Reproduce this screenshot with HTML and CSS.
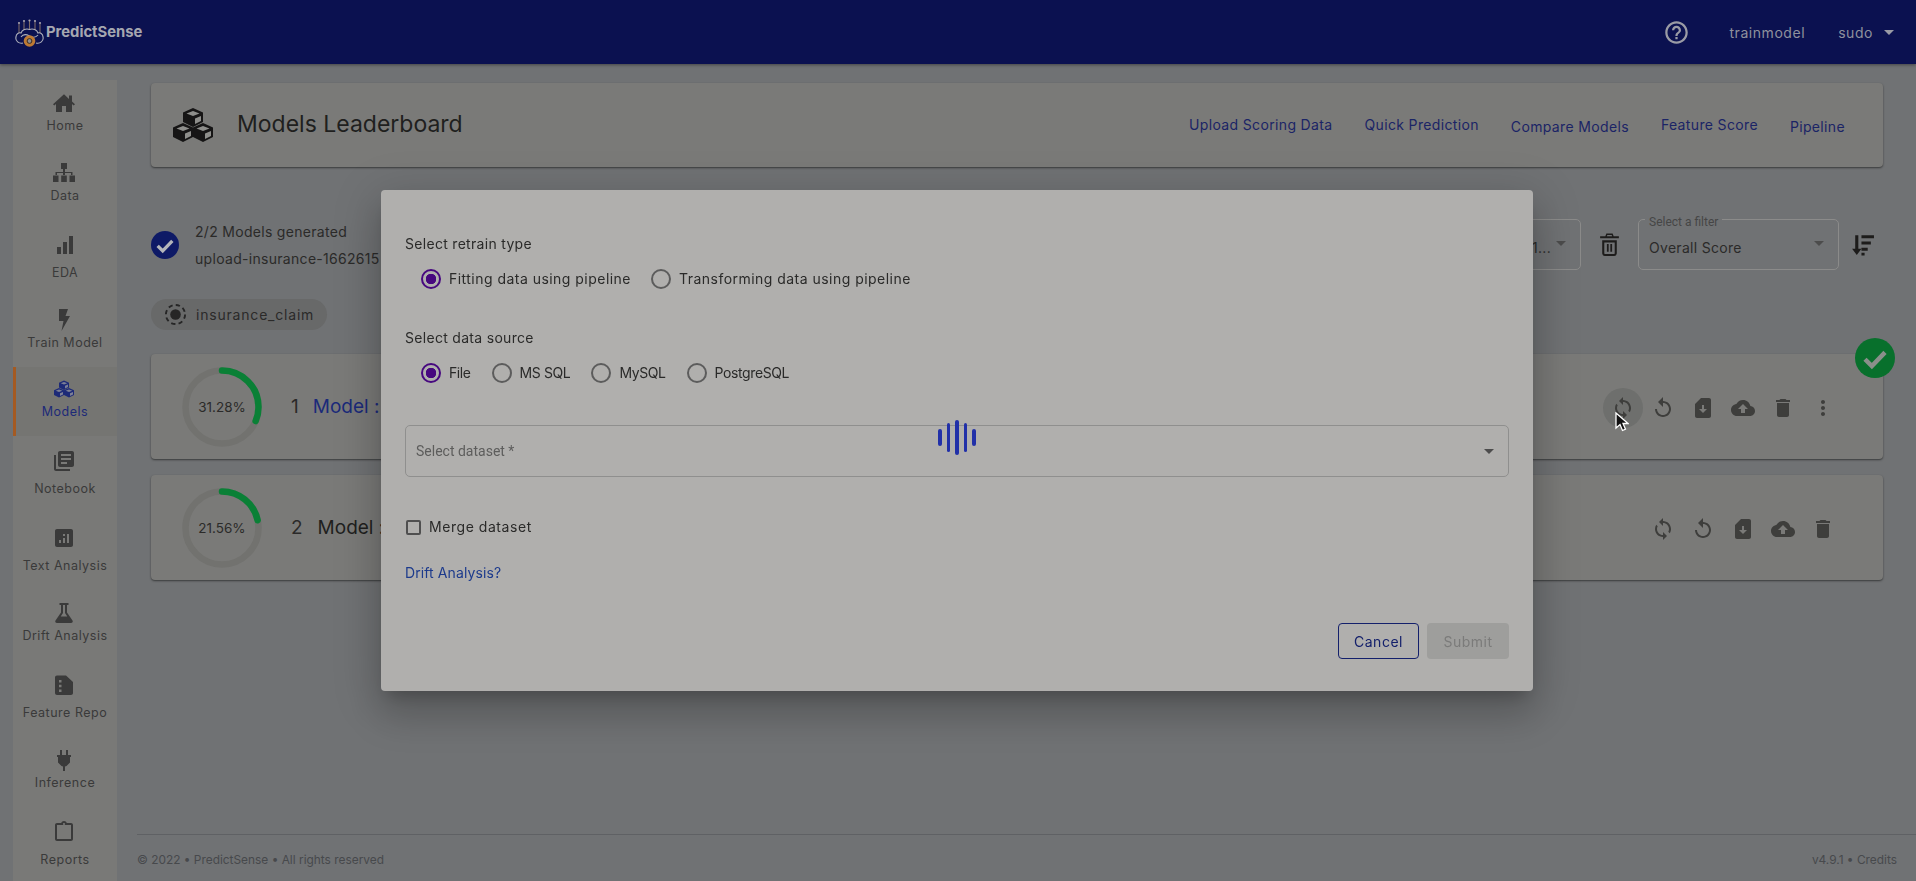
FILE: index.html
```html
<!DOCTYPE html>
<html>
<head>
    <title>PredictSense - Models Leaderboard</title>
    <link rel="stylesheet" href="styles.css">
</head>

<body>
<svg class="defs" width="0" height="0">
    <symbol id="i-home" viewBox="0 0 24 24"><path d="M12 3.200 1 13.200l1.300 1.400L4 13.100V21h6v-6h4v6h6v-7.900l1.700 1.500 1.300-1.400-3-2.700V4.500h-3v3.600z"/></symbol>
    <symbol id="i-data" viewBox="0 0 24 24"><path d="M9 2h6v6h-2v3h7.500v3H19v-2H13v2h-2v-2H5v2H3.500v-3H11V8H9zM1 14.500h5.500V21H1zM9.200 14.500h5.600V21H9.200zM17.500 14.500H23V21h-5.500z"/></symbol>
    <symbol id="i-bars" viewBox="0 0 24 24"><path d="M5 14h4v7H5zM11 9h4v12h-4zM17 3h4v18h-4z"/></symbol>
    <symbol id="i-bolt" viewBox="0 0 24 24"><path d="M7 1h9l-2.500 7H18L9.500 23l2-10H7z"/></symbol>
    <symbol id="i-cubes" viewBox="-4 -3 48 40">
        <g id="cube-top">
            <path d="M20 0l10 4.500V14l-10 5-10-5V4.500z"/>
            <path fill="var(--face)" d="M20 3l6.500 2.500L20 8l-6.500-2.500zM22 10.500l6-2.500v5l-6 3z"/>
        </g>
        <use href="#cube-top" x="-10" y="15"/>
        <use href="#cube-top" x="10" y="15"/>
    </symbol>
    <symbol id="i-book" viewBox="0 0 24 24"><path d="M4 6H2v14c0 1.100.9 2 2 2h14v-2H4V6zm16-4H8c-1.100 0-2 .9-2 2v12c0 1.100.9 2 2 2h12c1.100 0 2-.9 2-2V4c0-1.100-.9-2-2-2zm-1 9H9V9h10v2zm-4 4H9v-2h6v2zm4-8H9V5h10v2z"/></symbol>
    <symbol id="i-text" viewBox="0 0 24 24"><path d="M19 3H5c-1.100 0-2 .9-2 2v14c0 1.100.9 2 2 2h14c1.100 0 2-.9 2-2V5c0-1.100-.9-2-2-2zM9 17H7v-3h2v3zm4 0h-2v-5h2v5zm0-7h-2V8h2v2zm4 7h-2V8h2v9z"/></symbol>
    <symbol id="i-flask" viewBox="0 0 24 24"><path d="M7.500 2h9v2H15v7.500l5.500 8c.8 1.300-.2 2.500-1.500 2.500H5c-1.300 0-2.300-1.200-1.500-2.500l5.500-8V4H7.500zM11 4v8.100L8.700 15.500h6.600L13 12.100V4z" fill-rule="evenodd"/></symbol>
    <symbol id="i-file" viewBox="0 0 24 24"><path fill-rule="evenodd" d="M5 2.500h9l7 6.500V20c0 1.100-.9 2-2 2H5c-1.100 0-2-.9-2-2V4.500c0-1.100.9-2 2-2zM7 7v2.500h2.500V7zm0 4.800v2.500h2.500v-2.500zm0 4.800v2.500h2.500v-2.500z"/></symbol>
    <symbol id="i-plug" viewBox="0 0 24 24"><path d="M16.010 7 16 2h-2v5h-4V2H8v5H5v2h1v5.480L9.500 18l1.500.6V23h2v-4.400l1.500-.6 3.500-3.520V9h1V7z"/></symbol>
    <symbol id="i-clip" viewBox="0 0 24 24"><path d="M19 3h-4.180C14.400 1.840 13.300 1 12 1c-1.300 0-2.400.84-2.820 2H5c-1.100 0-2 .9-2 2v14c0 1.100.9 2 2 2h14c1.100 0 2-.9 2-2V5c0-1.100-.9-2-2-2zm-7 0c.55 0 1 .45 1 1s-.45 1-1 1-1-.45-1-1 .45-1 1-1zm7 16H5V5h14v14z"/></symbol>
    <symbol id="i-help" viewBox="0 0 24 24"><path d="M11 18h2v-2h-2v2zm1-16C6.480 2 2 6.480 2 12s4.480 10 10 10 10-4.480 10-10S17.520 2 12 2zm0 18c-4.410 0-8-3.590-8-8s3.590-8 8-8 8 3.590 8 8-3.590 8-8 8zm0-14c-2.210 0-4 1.790-4 4h2c0-1.100.9-2 2-2s2 .9 2 2c0 2-3 1.750-3 5h2c0-2.250 3-2.500 3-5 0-2.210-1.790-4-4-4z"/></symbol>
    <symbol id="i-check" viewBox="0 0 24 24"><path d="M4 13l5.500 5.500L20 7.500" fill="none" stroke="currentColor" stroke-width="3.600"/></symbol>
    <symbol id="i-trash-line" viewBox="0 0 24 24"><path d="M5 8v12.500C5 21.900 6.100 23 7.500 23h9c1.400 0 2.500-1.100 2.500-2.500V8zm2 2h10v10.500c0 .3-.2.5-.5.5h-9c-.3 0-.5-.2-.5-.5zm2.500 1.500V19h1.700v-7.500zm3.300 0V19h1.700v-7.500zM9 1.500 8 4H3v2h18V4h-5l-1-2.500zm.9 1.400h4.200l.4 1.100h-5z"/></symbol>
    <symbol id="i-sort" viewBox="0 0 24 24"><path d="M5 3h3v13h3l-4.500 6L2 16h3zM11 3h12v3H11zM11 9h9v3h-9zM11 15h6v3h-6zM11 20h3v2.500h-3z"/></symbol>
    <symbol id="i-sync" viewBox="0 0 24 24"><path d="M12 4V1L8 5l4 4V6c3.310 0 6 2.690 6 6 0 1.010-.25 1.970-.7 2.800l1.460 1.460C19.540 15.030 20 13.570 20 12c0-4.420-3.580-8-8-8zm0 14c-3.310 0-6-2.690-6-6 0-1.010.25-1.970.7-2.800L5.240 7.740C4.460 8.970 4 10.430 4 12c0 4.420 3.580 8 8 8v3l4-4-4-4v3z"/></symbol>
    <symbol id="i-replay" viewBox="0 0 24 24"><path d="M12 5V1L7 6l5 5V7c3.310 0 6 2.690 6 6s-2.690 6-6 6-6-2.690-6-6H4c0 4.420 3.580 8 8 8s8-3.580 8-8-3.580-8-8-8z"/></symbol>
    <symbol id="i-sim" viewBox="0 0 24 24"><path d="M18 2h-8L4 8v12c0 1.100.9 2 2 2h12c1.100 0 2-.9 2-2V4c0-1.100-.9-2-2-2zm-6 15-4-4h3V9.020L13 9v4h3l-4 4z"/></symbol>
    <symbol id="i-cloud" viewBox="0 0 24 24"><path d="M19.350 10.040C18.670 6.590 15.640 4 12 4 9.110 4 6.600 5.640 5.350 8.040 2.340 8.360 0 10.910 0 14c0 3.310 2.690 6 6 6h13c2.760 0 5-2.240 5-5 0-2.640-2.050-4.780-4.650-4.960zM14 13v4h-4v-4H7l5-5 5 5h-3z"/></symbol>
    <symbol id="i-trash" viewBox="0 0 24 24"><path d="M6 19c0 1.100.9 2 2 2h8c1.100 0 2-.9 2-2V7H6v12zM19 4h-3.500l-1-1h-5l-1 1H5v2h14V4z"/></symbol>
    <symbol id="i-more" viewBox="0 0 24 24"><path d="M12 8c1.100 0 2-.9 2-2s-.9-2-2-2-2 .9-2 2 .9 2 2 2zm0 2c-1.100 0-2 .9-2 2s.9 2 2 2 2-.9 2-2-.9-2-2-2zm0 6c-1.100 0-2 .9-2 2s.9 2 2 2 2-.9 2-2-.9-2-2-2z"/></symbol>
</svg>

<header class="topbar">
    <div class="brand">
        <svg class="brand-logo" viewBox="0 0 29 29">
            <g fill="none" stroke="#7d6a66" stroke-width="1.100">
                <path d="M4 15V6M9 12V4M14.500 11V3M20 12V4M25 15V6"/>
            </g>
            <g fill="none" stroke="#aeb0bc" stroke-width="1.100">
                <path d="M8 25c-4 1-8-2-7-6 0-3 3-5 5-4 1-3 5-5 8.500-3.500 3.500-1.500 7.500.5 8.500 3.500 2-1 5 1 5 4 1 4-3 7-7 6"/>
                <path d="M6 19c2-3 5-3 8.500-1s6 2 8.500-1"/>
            </g>
            <g fill="#a9a4ad"><circle cx="4" cy="5" r="1.100"/><circle cx="9" cy="3" r="1.100"/><circle cx="14.500" cy="2.500" r="1.100"/><circle cx="20" cy="3" r="1.100"/><circle cx="25" cy="5" r="1.100"/></g>
            <circle cx="14.500" cy="23" r="5.800" fill="#bd7a34"/>
            <circle cx="14.500" cy="23" r="2.400" fill="#8c8d90" stroke="#3a2a20"/>
        </svg>
        <span class="brand-name">PredictSense</span>
    </div>
    <div class="topbar-right">
        <svg class="help-icon"><use href="#i-help"/></svg>
        <span class="topbar-text project">trainmodel</span>
        <span class="topbar-text">sudo</span>
        <span class="caret caret-light"></span>
    </div>
</header>

<div class="layout">
    <nav class="sidebar">
        <a class="nav-item"><svg class="nav-icon"><use href="#i-home"/></svg><span>Home</span></a>
        <a class="nav-item"><svg class="nav-icon"><use href="#i-data"/></svg><span>Data</span></a>
        <a class="nav-item tall"><svg class="nav-icon"><use href="#i-bars"/></svg><span>EDA</span></a>
        <a class="nav-item"><svg class="nav-icon"><use href="#i-bolt"/></svg><span>Train Model</span></a>
        <a class="nav-item active"><svg class="nav-icon"><use href="#i-cubes"/></svg><span>Models</span></a>
        <a class="nav-item tall"><svg class="nav-icon"><use href="#i-book"/></svg><span>Notebook</span></a>
        <a class="nav-item tall"><svg class="nav-icon"><use href="#i-text"/></svg><span>Text Analysis</span></a>
        <a class="nav-item"><svg class="nav-icon"><use href="#i-flask"/></svg><span>Drift Analysis</span></a>
        <a class="nav-item tall"><svg class="nav-icon"><use href="#i-file"/></svg><span>Feature Repo</span></a>
        <a class="nav-item"><svg class="nav-icon"><use href="#i-plug"/></svg><span>Inference</span></a>
        <a class="nav-item tall"><svg class="nav-icon"><use href="#i-clip"/></svg><span>Reports</span></a>
    </nav>

    <main class="main">
        <div class="content">
            <section class="title-card">
                <svg class="title-icon"><use href="#i-cubes"/></svg>
                <h1 class="title">Models Leaderboard</h1>
                <div class="title-links">
                    <a>Upload Scoring Data</a>
                    <a>Quick Prediction</a>
                    <a class="low">Compare Models</a>
                    <a>Feature Score</a>
                    <a class="low">Pipeline</a>
                </div>
            </section>

            <section class="status-row">
                <span class="status-check"><svg><use href="#i-check"/></svg></span>
                <div class="status-text">
                    <div>2/2 Models generated</div>
                    <div>upload-insurance-1662615</div>
                </div>
                <div class="filters">
                    <div class="filter-box model-box"><span class="filter-value run-name">2 1...</span><span class="caret"></span></div>
                    <svg class="filter-icon"><use href="#i-trash-line"/></svg>
                    <div class="filter-box">
                        <label class="filter-label">Select a filter</label>
                        <span class="filter-value">Overall Score</span>
                        <span class="caret"></span>
                    </div>
                    <svg class="filter-icon sort"><use href="#i-sort"/></svg>
                </div>
            </section>

            <div class="chip">
                <svg class="chip-icon" viewBox="0 0 24 24">
                    <circle cx="12" cy="12" r="10" fill="none" stroke="#262626" stroke-width="2" stroke-dasharray="4.500 3.350"/>
                    <circle cx="12" cy="12" r="5.500" fill="#262626"/>
                </svg>
                insurance_claim
            </div>

            <section class="model-card">
                <div class="ring">
                    <svg viewBox="0 0 80 80">
                        <circle class="ring-track" cx="40" cy="40" r="36.500"/>
                        <circle class="ring-value" cx="40" cy="40" r="36.500" stroke-dasharray="71.700 229.300"/>
                    </svg>
                    <span>31.28%</span>
                </div>
                <span class="rank">1</span>
                <span class="model-name best">Model :</span>
                <div class="actions">
                    <button class="icon-btn hover"><svg><use href="#i-sync"/></svg></button>
                    <button class="icon-btn"><svg><use href="#i-replay"/></svg></button>
                    <button class="icon-btn"><svg><use href="#i-sim"/></svg></button>
                    <button class="icon-btn"><svg><use href="#i-cloud"/></svg></button>
                    <button class="icon-btn"><svg><use href="#i-trash"/></svg></button>
                    <button class="icon-btn"><svg><use href="#i-more"/></svg></button>
                </div>
                <span class="best-badge"><svg><use href="#i-check"/></svg></span>
            </section>

            <section class="model-card">
                <div class="ring">
                    <svg viewBox="0 0 80 80">
                        <circle class="ring-track" cx="40" cy="40" r="36.500"/>
                        <circle class="ring-value" cx="40" cy="40" r="36.500" stroke-dasharray="49.400 229.300"/>
                    </svg>
                    <span>21.56%</span>
                </div>
                <span class="rank">2</span>
                <span class="model-name second">Model :</span>
                <div class="actions">
                    <button class="icon-btn"><svg><use href="#i-sync"/></svg></button>
                    <button class="icon-btn"><svg><use href="#i-replay"/></svg></button>
                    <button class="icon-btn"><svg><use href="#i-sim"/></svg></button>
                    <button class="icon-btn"><svg><use href="#i-cloud"/></svg></button>
                    <button class="icon-btn"><svg><use href="#i-trash"/></svg></button>
                </div>
            </section>
        </div>

        <footer class="footer">
            <span>© 2022 • PredictSense • All rights reserved</span>
            <span>v4.9.1 • Credits</span>
        </footer>
    </main>
</div>

<div class="overlay">
    <div class="modal">
        <div class="field-title">Select retrain type</div>
        <div class="radio-row">
            <label class="radio checked"><i></i>Fitting data using pipeline</label>
            <label class="radio"><i></i>Transforming data using pipeline</label>
        </div>

        <div class="field-title second">Select data source</div>
        <div class="radio-row tight">
            <label class="radio checked"><i></i>File</label>
            <label class="radio"><i></i>MS SQL</label>
            <label class="radio"><i></i>MySQL</label>
            <label class="radio"><i></i>PostgreSQL</label>
        </div>

        <div class="select">
            <span>Select dataset *</span>
            <span class="caret"></span>
        </div>

        <label class="merge"><i></i>Merge dataset</label>
        <a class="drift-link">Drift Analysis?</a>

        <div class="modal-actions">
            <button class="btn btn-outline">Cancel</button>
            <button class="btn btn-disabled">Submit</button>
        </div>
    </div>
</div>

<div class="loader"><i></i><i></i><i></i><i></i><i></i></div>

<svg class="cursor" viewBox="0 0 14 20">
    <path d="M1 1v15l4-3.500 2.500 6 3-1.300-2.500-5.700h5z" fill="#111" stroke="#fff" stroke-width="1.300"/>
</svg>
</body>

</html>
```

FILE: styles.css
```css
* {
    box-sizing: border-box;
}

html, body {
    margin: 0;
    height: 881px;
    overflow: hidden;
}

body {
    display: flex;
    flex-direction: column;
    background-color: #707274;
    color: #2b2a29;
    font-family: Inter, "Open Sans", sans-serif;
    font-size: 14px;
}

.defs {
    position: absolute;
}

svg {
    fill: currentColor;
}

/* top bar */
.topbar {
    height: 64px;
    flex: none;
    display: flex;
    align-items: center;
    justify-content: space-between;
    padding: 0 22px 0 15px;
    background-color: #0b1150;
    box-shadow: 0 1px 3px #00000066;
}

.brand {
    display: flex;
    align-items: center;
    gap: 2px;
}

.brand-logo {
    width: 29px;
    height: 29px;
}

.brand-name {
    color: #a5a7b0;
    font-size: 14.800px;
    font-weight: 700;
}

.topbar-right {
    display: flex;
    align-items: center;
}

.help-icon {
    width: 27px;
    height: 27px;
    margin-right: 39px;
    color: #9a9ba5;
}

.topbar-text {
    color: #8f919e;
    font-size: 14px;
    letter-spacing: .55px;
}

.project {
    margin-right: 33px;
}

.caret {
    width: 0;
    height: 0;
    border-left: 5px solid transparent;
    border-right: 5px solid transparent;
    border-top: 5px solid #4c4c4c;
}

.caret-light {
    margin-left: 11px;
    border-top-color: #9a9ba5;
}

/* sidebar */
.layout {
    flex: 1;
    display: flex;
    min-height: 0;
}

.sidebar {
    width: 104px;
    flex: none;
    margin: 16px 0 0 13px;
    background-color: #797977;
}

.nav-item {
    height: 70px;
    display: flex;
    flex-direction: column;
    align-items: center;
    justify-content: flex-end;
    gap: 2px;
    padding-bottom: 15px;
    color: #3a3a3a;
    font-size: 12.500px;
    line-height: 18px;
    letter-spacing: .5px;
}

.nav-item.tall {
    height: 77px;
    gap: 7px;
}

.nav-item.active {
    height: 69px;
    color: #1d2a78;
    border-left: 3px solid #a45a22;
    background-color: #757572;
    padding-right: 3px;
    --face: #7d8096;
}

.nav-icon {
    width: 24px;
    height: 24px;
    flex: none;
    margin-right: 3px;
}

/* main column */
.main {
    flex: 1;
    min-width: 0;
    display: flex;
    flex-direction: column;
    margin-left: 20px;
}

.content {
    flex: 1;
    padding: 19px 33px 0 14px;
}

.title-card {
    height: 84px;
    display: flex;
    align-items: center;
    padding: 0 38px 0 18px;
    background-color: #7a7a78;
    border-radius: 4px;
    box-shadow: 0 1px 2px #00000080;
}

.title-icon {
    width: 48px;
    height: 40px;
    flex: none;
    color: #161515;
    --face: #8e8e8b;
}

.title {
    margin: -2px 0 0 20px;
    font-size: 23px;
    font-weight: 400;
    color: #201f1e;
}

.title-links {
    margin-left: auto;
    display: flex;
    gap: 32px;
    color: #1b2466;
    letter-spacing: .35px;
}

.title-links .low {
    padding-top: 2px;
}

.status-row {
    height: 51px;
    margin-top: 52px;
    display: flex;
    align-items: center;
}

.status-check {
    width: 28px;
    height: 28px;
    display: flex;
    align-items: center;
    justify-content: center;
    border-radius: 50%;
    background-color: #0e1a66;
    color: #b4b6bb;
}

.status-check svg {
    width: 22px;
    height: 22px;
}

.status-text {
    margin-left: 16px;
    line-height: 27px;
    letter-spacing: .3px;
}

.filters {
    margin-left: auto;
    display: flex;
    align-items: center;
}

.filter-box {
    position: relative;
    width: 201px;
    height: 51px;
    display: flex;
    align-items: center;
    justify-content: space-between;
    padding: 6px 14px 0 10px;
    border: 1px solid #8b8b8a;
    border-radius: 5px;
}

.filter-box .caret {
    margin-top: -8px;
}

.model-box {
    justify-content: flex-end;
    gap: 5px;
}

.run-name {
    word-spacing: 3px;
}

.filter-label {
    position: absolute;
    top: -5px;
    left: 6px;
    padding: 0 4px;
    background-color: #707274;
    color: #464646;
    font: 12px Roboto, sans-serif;
}

.filter-value {
    letter-spacing: .3px;
}

.filter-icon {
    width: 25px;
    height: 25px;
    margin: 0 16px;
    color: #1d1c1b;
}

.filter-icon.sort {
    margin: 0 8px 0 11px;
}

.chip {
    width: 176px;
    height: 31px;
    margin-top: 29px;
    display: flex;
    align-items: center;
    gap: 9px;
    padding-left: 13px;
    border-radius: 16px;
    background-color: #686969;
    letter-spacing: .8px;
}

.chip-icon {
    width: 23px;
    height: 23px;
}

/* model rows */
.model-card {
    position: relative;
    height: 105px;
    margin-top: 16px;
    display: flex;
    align-items: center;
    padding: 0 40px 0 31px;
    background-color: #7a7a78;
    border-radius: 4px;
    box-shadow: 0 1px 2px #00000080;
}

.chip + .model-card {
    margin-top: 24px;
}

.ring {
    width: 80px;
    height: 80px;
    display: grid;
    place-items: center;
    font-size: 13.500px;
}

.ring svg, .ring span {
    grid-area: 1 / 1;
}

.ring svg {
    width: 80px;
    height: 80px;
    transform: rotate(-90deg);
}

.ring circle {
    fill: none;
    stroke-width: 6.500;
}

.ring-track {
    stroke: #72726f;
}

.ring-value {
    stroke: #0a8036;
    stroke-linecap: round;
}

.rank {
    margin-left: 29px;
    font-size: 19px;
}

.model-name {
    margin-left: 14px;
    font-size: 19px;
    color: #201f1e;
}

.model-name.second {
    margin-left: 15px;
}

.model-name.best {
    color: #1b2a7a;
}

.actions {
    margin-left: auto;
    display: flex;
    padding-top: 3px;
}

.icon-btn {
    width: 40px;
    height: 40px;
    display: flex;
    align-items: center;
    justify-content: center;
    padding: 0;
    border: 0;
    border-radius: 50%;
    background: none;
    color: #3e3e3c;
}

.icon-btn svg {
    width: 24px;
    height: 24px;
}

.icon-btn.hover {
    background-color: #6e6f6d;
}

.best-badge {
    position: absolute;
    top: -16px;
    right: -12px;
    width: 40px;
    height: 40px;
    display: flex;
    align-items: center;
    justify-content: center;
    border-radius: 50%;
    background-color: #08702c;
    color: #8a8f8a;
}

.best-badge svg {
    width: 30px;
    height: 30px;
}

.footer {
    height: 47px;
    flex: none;
    display: flex;
    align-items: center;
    justify-content: space-between;
    padding: 3px 19px 0 0;
    border-top: 1px solid #5f6164;
    color: #47494c;
    font-size: 11.900px;
}

/* retrain dialog */
.overlay {
    position: fixed;
    top: 0;
    left: 0;
    width: 100%;
    height: 100%;
    pointer-events: none;
}

.modal {
    position: absolute;
    top: 190px;
    left: 381px;
    width: 1152px;
    height: 501px;
    padding: 44px 24px 0;
    background-color: #b0afad;
    border-radius: 4px;
    box-shadow: 0 11px 15px -7px #00000033, 0 24px 38px 3px #00000024, 0 9px 46px 8px #0000001f;
    color: #2a2a29;
    letter-spacing: .3px;
}

.field-title {
    line-height: 20px;
}

.field-title.second {
    margin-top: 39px;
}

.radio-row {
    display: flex;
    gap: 20px;
    margin-top: 15px;
    padding-left: 16px;
    letter-spacing: .47px;
}

.radio-row.tight {
    gap: 21px;
    letter-spacing: -.4px;
}

.radio {
    display: flex;
    align-items: center;
    gap: 8px;
    line-height: 20px;
}

.radio i {
    width: 20px;
    height: 20px;
    border: 2px solid #5c5c5c;
    border-radius: 50%;
}

.radio.checked i {
    border-color: #47087f;
    background: radial-gradient(circle, #47087f 5px, transparent 5.500px);
}

.select {
    height: 52px;
    margin-top: 42px;
    display: flex;
    align-items: center;
    justify-content: space-between;
    padding: 0 14px 0 10px;
    border: 1px solid #8f8f8e;
    border-radius: 5px;
    color: #5d5d5c;
    font-family: Roboto, sans-serif;
    letter-spacing: 0;
}

.merge {
    display: flex;
    align-items: center;
    gap: 8px;
    margin-top: 40px;
    margin-left: 1px;
    line-height: 20px;
    letter-spacing: .55px;
}

.merge i {
    width: 15px;
    height: 15px;
    border: 2px solid #4f4f4f;
    border-radius: 2px;
}

.drift-link {
    display: block;
    margin-top: 26px;
    line-height: 20px;
    color: #1c3a8c;
    letter-spacing: .1px;
}

.modal-actions {
    position: absolute;
    right: 24px;
    bottom: 32px;
    display: flex;
    gap: 8px;
}

.btn {
    height: 36px;
    padding: 0;
    border-radius: 4px;
    font: inherit;
    letter-spacing: .5px;
}

.btn-outline {
    width: 81px;
    border: 1px solid #14206b;
    background: none;
    color: #14206b;
}

.btn-disabled {
    width: 82px;
    border: 0;
    background-color: #9e9e9c;
    color: #7b7b7a;
}

/* loader over the dialog */
.loader {
    position: fixed;
    top: 420px;
    left: 938px;
    height: 35px;
    display: flex;
    align-items: center;
    gap: 5px;
}

.loader i {
    width: 3.500px;
    border-radius: 2px;
    background-color: #2130a8;
}

.loader i:nth-child(1), .loader i:nth-child(5) {
    height: 17px;
}

.loader i:nth-child(2), .loader i:nth-child(4) {
    height: 29px;
}

.loader i:nth-child(3) {
    height: 35px;
}

.cursor {
    position: fixed;
    top: 412px;
    left: 1615px;
    width: 14px;
    height: 20px;
}
```
